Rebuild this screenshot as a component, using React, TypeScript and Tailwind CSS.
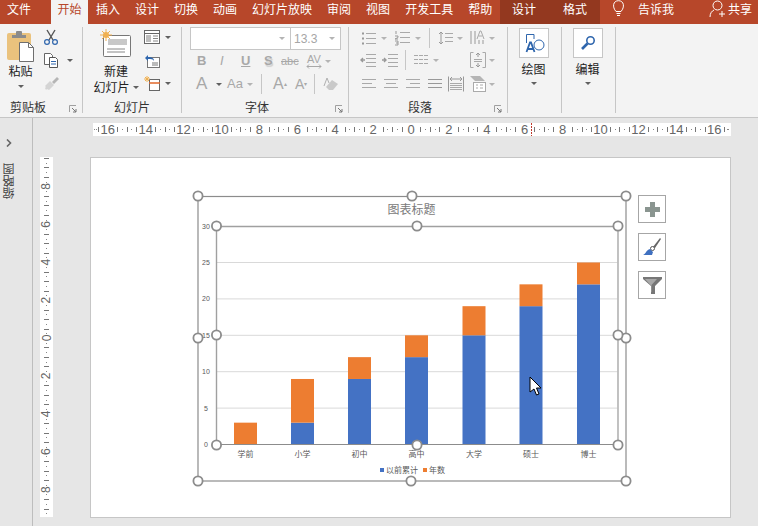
import type { ReactNode } from 'react';

const CJK = { fontFamily: '"Noto Sans CJK SC", "Liberation Sans", sans-serif' };
const LATIN = { fontFamily: '"Liberation Sans", sans-serif' };

const TABS = ['插入', '设计', '切换', '动画', '幻灯片放映', '审阅', '视图', '开发工具', '帮助'];

const BARS = [
  { name: '学前', x: 245.5, blue: 0, orange: 3 },
  { name: '小学', x: 302.5, blue: 3, orange: 6 },
  { name: '初中', x: 359.5, blue: 9, orange: 3 },
  { name: '高中', x: 416.5, blue: 12, orange: 3 },
  { name: '大学', x: 474, blue: 15, orange: 4 },
  { name: '硕士', x: 531, blue: 19, orange: 3 },
  { name: '博士', x: 588.5, blue: 22, orange: 3 },
];

const Y0 = 444.5;
const UNIT = 7.28;

function Caret({ dim = false }: { dim?: boolean }) {
  return (
    <span className={`inline-block h-0 w-0 border-x-[3px] border-t-[3px] border-x-transparent ${dim ? 'border-t-[#b4b4b4]' : 'border-t-[#606060]'}`} />
  );
}

function Ico({ w = 16, h = 16, children }: { w?: number; h?: number; children: ReactNode }) {
  return (
    <svg width={w} height={h} viewBox={`0 0 ${w} ${h}`} fill="none" className="shrink-0">
      {children}
    </svg>
  );
}

function Lines({ x, y, w, n, gap, c = '#a9a9a9' }: { x: number; y: number; w: number; n: number; gap: number; c?: string }) {
  return (
    <>
      {Array.from({ length: n }, (_, i) => (
        <path key={i} d={`M${x} ${y + i * gap + 0.5}h${w}`} stroke={c} />
      ))}
    </>
  );
}

function Group({ width, label, labelClass = '', launcher, children }: { width: number; label?: string; labelClass?: string; launcher?: boolean; children: ReactNode }) {
  return (
    <div className="flex shrink-0 flex-col" style={{ width }}>
      <div className="mt-[3px] flex h-[86px] flex-col border-r border-[#c6c6c6]">
        <div className="h-[73px]">{children}</div>
        <div className={`relative flex h-[13px] items-center justify-center text-[12px] leading-none text-[#333] ${labelClass}`}>
          {label}
          {launcher && (
            <svg width="8" height="8" viewBox="0 0 8 8" fill="none" className="absolute bottom-0 right-[5px]">
              <path d="M.5 7V.5H7" stroke="#a0a0a0" />
              <path d="M3 3l4 4M7 4v3H4" stroke="#777" />
            </svg>
          )}
        </div>
      </div>
    </div>
  );
}

function ClipboardGroup() {
  return (
    <div className="flex pl-[5px] pt-[2px]">
      <div className="flex w-[31px] flex-col items-center">
        <Ico w={31} h={33}>
          <rect x="2" y="4" width="24" height="27" rx="2" fill="#eac27d" />
          <path d="M7 9V6h4V3a1 1 0 0 1 1-1h4a1 1 0 0 1 1 1v3h4v3z" fill="#8b8b8b" />
          <path d="M14.5 13.5h9l5 5v14h-14z" fill="#fff" stroke="#6f6f6f" />
          <path d="M23.5 13.5v5h5" stroke="#6f6f6f" />
        </Ico>
        <span className="mt-px text-[12px] leading-[16px] text-[#222]">粘贴</span>
        <span className="mt-[6px] flex"><Caret /></span>
      </div>
      <div className="ml-[7px] flex flex-col gap-[7px]">
        <Ico w={16} h={16}>
          <path d="M4 1l6 10M12 1L6 11" stroke="#555" strokeWidth="1.4" />
          <circle cx="4" cy="13" r="2.4" stroke="#2f66ad" strokeWidth="1.2" />
          <circle cx="12" cy="13" r="2.4" stroke="#2f66ad" strokeWidth="1.2" />
        </Ico>
        <div className="flex items-center gap-[2px]">
          <Ico w={16} h={16}>
            <path d="M1.5 1.5h6l2 2v9h-8z" fill="#fff" stroke="#666" />
            <path d="M6.5 5.5h6l2 2v8h-8z" fill="#fff" stroke="#555" />
            <path d="M8 9.5h5M8 12h5" stroke="#2f66ad" />
          </Ico>
          <span className="ml-[6px] flex"><Caret /></span>
        </div>
        <Ico w={16} h={16}>
          <path d="M9 7l5-5 2 2-5 5z" fill="#b5b5b5" />
          <path d="M2 11l5-5 4 4-5 5-2-1-1 1-1-2 1-1z" fill="#d4d4d4" />
        </Ico>
      </div>
    </div>
  );
}

function SlidesGroup() {
  return (
    <div className="flex pl-[10px] pt-[2px]">
      <div className="flex w-[46px] flex-col items-center">
        <Ico w={32} h={28}>
          <rect x="3.5" y="6.5" width="27" height="21" rx="1" fill="#fff" stroke="#777" />
          <rect x="8" y="10" width="19" height="6" fill="#c8c8c8" />
          <path d="M7 20h18M7 23h18" stroke="#888" />
          <circle cx="6" cy="6" r="3" fill="#f0b050" />
          <path d="M6 0v12M0 6h12M2 2l8 8M10 2l-8 8" stroke="#f0b050" />
        </Ico>
        <span className="mt-[6px] whitespace-nowrap text-[12px] leading-[16px] text-[#222]">新建</span>
        <span className="flex items-center gap-[3px] whitespace-nowrap text-[12px] leading-[16px] text-[#222]">幻灯片<Caret /></span>
      </div>
      <div className="ml-[5px] flex flex-col gap-[8px] pt-px">
        <div className="flex items-center gap-[5px]">
          <Ico w={16} h={15}>
            <rect x=".5" y=".5" width="15" height="13" fill="#fff" stroke="#666" />
            <path d="M1 3.5h14" stroke="#666" />
            <rect x="2" y="5" width="5" height="7" fill="#bdbdbd" />
            <path d="M9 6h5M9 8.5h5M9 11h5" stroke="#888" />
          </Ico>
          <Caret />
        </div>
        <Ico w={16} h={15}>
          <rect x="3.5" y="4.5" width="12" height="10" fill="#fff" stroke="#777" />
          <rect x="8" y="9" width="6" height="4" fill="#bbb" />
          <path d="M1 5l3-3v2c4 0 6 1 6 4-1-2-3-2-6-2v2z" fill="#2f66ad" />
        </Ico>
        <div className="flex items-center gap-[5px]">
          <Ico w={16} h={15}>
            <rect x="5.5" y="3.5" width="10" height="11" fill="#fff" stroke="#666" />
            <path d="M5 7h11" stroke="#e0672a" strokeWidth="1.5" />
            <path d="M3 0v6M0 3h6M1 1l4 4M5 1L1 5" stroke="#f0b050" />
          </Ico>
          <Caret />
        </div>
      </div>
    </div>
  );
}

function FontGroup() {
  return (
    <div className="pl-[8px]" style={LATIN}>
      <div className="flex h-[23px] w-[151px] border border-[#c6c6c6] bg-white">
        <div className="flex flex-1 items-center justify-end border-r border-[#c6c6c6] pr-[5px]"><Caret dim /></div>
        <div className="flex w-[49px] items-center justify-between pl-[3px] pr-[5px] text-[12px] text-[#a6a6a6]">
          13.3<Caret dim />
        </div>
      </div>
      <div className="mt-px flex h-[20px] items-center pl-[7px] text-[13px] text-[#a8a8a8]">
        <span className="w-[23px] font-bold">B</span>
        <span className="w-[21px] italic">I</span>
        <span className="w-[23px] font-bold underline">U</span>
        <span className="w-[17px] font-bold [text-shadow:1px_2px_1px_#cfcfcf]">S</span>
        <span className="w-[22px] text-[11px] line-through">abc</span>
        <span className="flex w-[22px] flex-col items-center text-[11px] leading-[10px]">
          AV
          <svg width="16" height="5" viewBox="0 0 16 5" fill="none">
            <path d="M1 2.5h14M3 .5l-2 2 2 2M13 .5l2 2-2 2" stroke="#a8a8a8" />
          </svg>
        </span>
        <Caret dim />
      </div>
      <div className="mt-[2px] flex h-[22px] items-center pl-[6px] text-[14px] text-[#a8a8a8]">
        <span className="w-[20px] text-[17px]">A</span>
        <span className="mr-[5px] flex"><Caret /></span>
        <span className="w-[20px] text-[13px]">Aa</span>
        <span className="flex w-[14px]"><Caret dim /></span>
        <span className="mr-[11px] h-[20px] w-px bg-[#c6c6c6]" />
        <span className="w-[22px] text-[16px]">A<sup className="text-[6px]">▴</sup></span>
        <span className="w-[19px] text-[14px]">A<sup className="text-[6px]">▾</sup></span>
        <span className="mr-[8px] h-[20px] w-px bg-[#c6c6c6]" />
        <Ico w={15} h={15}>
          <path d="M3 10l6-7 6 4-5 6H6z" fill="#c9c9c9" />
          <path d="M1 9l3-8 2 5" stroke="#b0b0b0" />
        </Ico>
      </div>
    </div>
  );
}

function ParagraphGroup() {
  return (
    <div className="pl-[12px] pt-[2px]">
      <div className="flex h-[18px] items-center">
        <Ico w={15} h={14}>
          <Lines x={5} y={2} w={10} n={3} gap={5} />
          <path d="M1 2.5h2M1 7.5h2M1 12.5h2" stroke="#999" strokeWidth="2" />
        </Ico>
        <span className="ml-[5px] mr-[7px] flex"><Caret dim /></span>
        <Ico w={16} h={16}>
          <Lines x={6} y={2} w={10} n={3} gap={5} />
          <path d="M2 1v3M1 6h3v1.5L1 9h3M1 11h3v4H1M2 13h2" stroke="#999" />
        </Ico>
        <span className="ml-[5px] mr-[8px] flex"><Caret dim /></span>
        <span className="mr-[8px] h-[20px] w-px bg-[#c6c6c6]" />
        <Ico w={15} h={16}>
          <path d="M3 2v12M1 4l2-2 2 2M1 12l2 2 2-2" stroke="#999" />
          <Lines x={7} y={3} w={8} n={3} gap={4} />
        </Ico>
        <span className="ml-[4px] mr-[7px] flex"><Caret dim /></span>
        <Ico w={16} h={16}>
          <path d="M1 1v13M5 1v13M9 10v4M13 10v4" stroke="#999" />
          <path d="M7 9l3-8h1l3 8M8.500 6h4" stroke="#aaa" />
        </Ico>
        <span className="ml-[3px] flex"><Caret dim /></span>
      </div>
      <div className="-ml-px mt-[4px] flex h-[18px] items-center">
        <Ico w={16} h={14}>
          <Lines x={6} y={1} w={10} n={4} gap={4} />
          <path d="M1 7h4M3 5L1 7l2 2" stroke="#999" strokeWidth="1.4" />
        </Ico>
        <span className="w-[6px]" />
        <Ico w={16} h={14}>
          <Lines x={6} y={1} w={10} n={4} gap={4} />
          <path d="M0 7h4M2 5l2 2-2 2" stroke="#999" strokeWidth="1.4" />
        </Ico>
        <span className="ml-[7px] mr-[8px] h-[20px] w-px bg-[#c6c6c6]" />
        <Ico w={14} h={12}>
          <Lines x={0} y={1} w={4} n={3} gap={4} />
          <Lines x={5} y={1} w={4} n={3} gap={4} />
          <Lines x={10} y={1} w={4} n={3} gap={4} />
        </Ico>
        <span className="ml-[5px] mr-[31px] flex"><Caret dim /></span>
        <Ico w={16} h={16}>
          <path d="M3.5.5h-3v15h3M12.5.5h3v15h-3" stroke="#aaa" />
          <path d="M8 1v4M8 11v4M6 3l2-2 2 2M6 13l2 2 2-2" stroke="#999" />
          <Lines x={4} y={7} w={8} n={2} gap={2} />
        </Ico>
        <span className="ml-[3px] flex"><Caret dim /></span>
      </div>
      <div className="mt-[6px] flex h-[18px] items-center">
        <Ico w={15} h={12}>
          <path d="M1 1.5h14M1 5.5h10M1 9.5h14" stroke="#a9a9a9" />
        </Ico>
        <span className="w-[7px]" />
        <Ico w={15} h={12}>
          <path d="M1 1.5h14M3 5.5h10M1 9.5h14" stroke="#a9a9a9" />
        </Ico>
        <span className="w-[7px]" />
        <Ico w={15} h={12}>
          <path d="M1 1.5h14M5 5.5h10M1 9.5h14" stroke="#a9a9a9" />
        </Ico>
        <span className="w-[7px]" />
        <Ico w={15} h={12}><Lines x={1} y={1} w={14} n={3} gap={4} c="#999" /></Ico>
        <span className="w-[6px]" />
        <Ico w={16} h={16}>
          <path d="M.5.5v15M15.5.5v15M3 3h10M4 1L2 3l2 2M12 1l2 2-2 2" stroke="#999" />
          <Lines x={2} y={7} w={12} n={4} gap={2} />
        </Ico>
        <span className="w-[6px]" />
        <Ico w={16} h={16}>
          <path d="M0 0h10l5 5H5z" fill="#b5b5b5" />
          <rect x="3.5" y="6.5" width="12" height="9" fill="#fff" stroke="#aaa" />
          <path d="M6 9h2M10 9h3M6 12h2M10 12h3" stroke="#aaa" />
        </Ico>
        <span className="ml-[3px] flex"><Caret dim /></span>
      </div>
    </div>
  );
}

function BigTool({ label, children }: { label: string; children: ReactNode }) {
  return (
    <div className="flex flex-col items-center">
      <div className="flex h-[30px] w-[30px] items-center justify-center border border-[#c6c6c6] bg-white">{children}</div>
      <span className="mt-[3px] text-[12px] leading-[16px] text-[#222]">{label}</span>
      <span className="mt-[5px] flex"><Caret /></span>
    </div>
  );
}

function Ribbon() {
  return (
    <div className="flex h-[94px] border-b border-[#c6c6c6] bg-[#f3f3f3]">
      <Group width={83} label="剪贴板" labelClass="pr-[26px]" launcher><ClipboardGroup /></Group>
      <Group width={99} label="幻灯片"><SlidesGroup /></Group>
      <Group width={167} label="字体" labelClass="pr-[16px]" launcher><FontGroup /></Group>
      <Group width={159} label="段落" labelClass="pr-[16px]" launcher><ParagraphGroup /></Group>
      <Group width={54}>
        <div className="flex justify-center pr-[2px] pt-px">
          <BigTool label="绘图">
            <Ico w={22} h={22}>
              <path d="M3.500 11V2.500H11V7" stroke="#2f66ad" />
              <circle cx="16" cy="13" r="5" fill="#fff" stroke="#2f66ad" />
              <path d="M3.500 20L7 10.500h1L11.500 20M5 17h5" stroke="#2f66ad" strokeWidth="1.800" />
            </Ico>
          </BigTool>
        </div>
      </Group>
      <Group width={54}>
        <div className="flex justify-center pr-[2px] pt-px">
          <BigTool label="编辑">
            <Ico w={16} h={16}>
              <circle cx="10.5" cy="5.5" r="3.7" stroke="#2f66ad" strokeWidth="1.6" />
              <path d="M7.5 8.5L2 14" stroke="#2f66ad" strokeWidth="2.6" />
            </Ico>
          </BigTool>
        </div>
      </Group>
    </div>
  );
}

function TitleBar() {
  return (
    <div className="flex h-[24px] items-start bg-[#b7472a] text-[12px] leading-[17px] text-white">
      <span className="ml-[7px] mr-[20px]">文件</span>
      <span className="h-[24px] w-[37px] bg-[#f3f3f3] text-center text-[#b7472a]">开始</span>
      <div className="ml-[8px] flex w-[396px] gap-[15px]">
        {TABS.map((t) => (
          <span key={t} className="whitespace-nowrap">{t}</span>
        ))}
      </div>
      <div className="ml-[8px] flex h-[24px] w-[100px] gap-[27px] bg-[#93381f] pl-[12px]">
        <span>设计</span>
        <span>格式</span>
      </div>
      <span className="ml-[12px] mr-[13px]">
        <Ico w={13} h={17}>
          <path d="M4 11.5C0 7 1 .7 6.5.7S13 7 9 11.5zM4.5 13.5h4M5 15.5h3" stroke="#fff" />
        </Ico>
      </span>
      <span className="text-[12px]">告诉我</span>
      <span className="ml-[35px] mr-[3px]">
        <Ico w={16} h={18}>
          <circle cx="8.5" cy="5.5" r="4.5" stroke="#fff" />
          <path d="M1 17c0-4 2-6 4-7M10 14h6M13 11v6" stroke="#fff" />
        </Ico>
      </span>
      <span>共享</span>
    </div>
  );
}

function HRuler() {
  const labels = [16, 14, 12, 10, 8, 6, 4, 2, 0, 2, 4, 6, 8, 10, 12, 14, 16];
  const ticks = Array.from({ length: 137 }, (_, i) => i - 68);
  return (
    <svg width="638" height="13" viewBox="0 0 638 13" className="block bg-white">
      {ticks.map((t) => {
        const m = ((t % 8) + 8) % 8;
        if (m === 0 || m === 1 || m === 7) return null;
        const x = Math.round(318 + t * 4.7375) + 0.5;
        return t % 2 === 0 ? (
          <path key={t} d={`M${x} 4v5`} stroke="#777" />
        ) : (
          <path key={t} d={`M${x} 6v1`} stroke="#888" />
        );
      })}
      <path d="M3.5 6v1M634.5 6v1" stroke="#888" />
      {labels.map((n, i) => (
        <text key={i} x={318 + (i - 8) * 37.9} y="11" fontSize="13" fill="#666" textAnchor="middle" fontFamily="Liberation Sans">{n}</text>
      ))}
      <path d="M438.5 0v13" stroke="#c0392b" strokeDasharray="2 1" />
    </svg>
  );
}

function VRuler() {
  const labels = [8, 6, 4, 2, 0, 2, 4, 6, 8];
  const ticks = Array.from({ length: 77 }, (_, i) => i - 38);
  return (
    <svg width="13" height="360" viewBox="0 0 13 360" className="block shrink-0 bg-white">
      {ticks.map((t) => {
        const m = ((t % 8) + 8) % 8;
        if (m === 0) return null;
        const y = Math.round(181 + t * 4.7375) + 0.5;
        return t % 2 === 0 ? (
          <path key={t} d={`M4 ${y}h5`} stroke="#777" />
        ) : (
          <path key={t} d={`M6 ${y}h1`} stroke="#888" />
        );
      })}
      {labels.map((n, i) => {
        const y = 181 + (i - 4) * 37.9;
        return (
          <text key={i} x="6.5" y={y} fontSize="12" fill="#666" textAnchor="middle" dominantBaseline="central" transform={`rotate(-90 6.5 ${y})`} fontFamily="Liberation Sans">{n}</text>
        );
      })}
    </svg>
  );
}

function Handle({ x, y }: { x: number; y: number }) {
  return <circle cx={x} cy={y} r="4.6" fill="#fff" stroke="#8c8c8c" strokeWidth="1.8" />;
}

// chart uses page coordinates, the viewBox maps them onto the slide
function Chart() {
  const outer: [number, number][] = [[198, 196], [412, 196], [626, 196], [198, 338], [626, 338], [198, 481], [411, 481], [626, 481]];
  const inner: [number, number][] = [[216.5, 226], [417, 226], [618, 226], [216.5, 335], [618, 335], [216.5, 445], [417, 445], [618, 445]];
  return (
    <svg width="641" height="361" viewBox="90 157 641 361" className="block" style={CJK}>
      {[0, 5, 10, 15, 20, 25, 30].map((v) => {
        const y = Y0 - v * UNIT;
        return (
          <g key={v}>
            {v > 0 && v < 30 && <path d={`M217 ${y}H618`} stroke="#d9d9d9" />}
            <text x="206" y={y + 2.5} fontSize="7" fill="#595959" textAnchor="middle" fontFamily="Liberation Sans">{v}</text>
          </g>
        );
      })}
      {BARS.map((b) => (
        <g key={b.name}>
          <rect x={b.x - 11.5} y={Y0 - b.blue * UNIT} width="23" height={b.blue * UNIT} fill="#4472c4" />
          <rect x={b.x - 11.5} y={Y0 - (b.blue + b.orange) * UNIT} width="23" height={b.orange * UNIT} fill="#ed7d31" />
          <text x={b.x} y="457" fontSize="8" fill="#595959" textAnchor="middle">{b.name}</text>
        </g>
      ))}
      <path d="M217 444.5H618" stroke="#8c8c8c" strokeWidth="1.2" />
      <text x="411.5" y="214" fontSize="12" fill="#7a7a7a" textAnchor="middle">图表标题</text>
      <rect x="380" y="468" width="4" height="4" fill="#4472c4" />
      <text x="386" y="473" fontSize="8" fill="#595959">以前累计</text>
      <rect x="423" y="468" width="4" height="4" fill="#ed7d31" />
      <text x="429" y="473" fontSize="8" fill="#595959">年数</text>
      <rect x="198" y="196.5" width="428" height="284.5" stroke="#8c8c8c" strokeWidth="1.2" fill="none" />
      <path d="M216.5 445V226.5H618" stroke="#a0a0a0" strokeWidth="1.4" fill="none" />
      <path d="M618 226.5V445" stroke="#bbbbbb" strokeWidth="1.8" fill="none" />
      {outer.map(([x, y]) => <Handle key={`o${x}-${y}`} x={x} y={y} />)}
      {inner.map(([x, y]) => <Handle key={`i${x}-${y}`} x={x} y={y} />)}
    </svg>
  );
}

function SideButton({ children }: { children: ReactNode }) {
  return <div className="flex h-[28px] w-[28px] items-center justify-center border border-[#a6a6a6] bg-white">{children}</div>;
}

function Slide() {
  return (
    <div className="relative ml-[37px] h-[361px] w-[641px] border border-[#c6c6c6] bg-white">
      <div className="-m-px"><Chart /></div>
      <div className="absolute left-[547px] top-[37px] flex flex-col gap-[10px]">
        <SideButton>
          <Ico w={15} h={15}><path d="M5 0h5v5h5v5h-5v5H5v-5H0V5h5z" fill="#8a9590" /></Ico>
        </SideButton>
        <SideButton>
          <Ico w={20} h={20}>
            <path d="M18 1l1 1-6 9-2-1z" fill="#666" />
            <circle cx="10.5" cy="11.5" r="2" fill="#fff" stroke="#555" />
            <path d="M1 18c3-1 3-5 7-6l3 3-1 3z" fill="#3f70c0" />
          </Ico>
        </SideButton>
        <SideButton>
          <Ico w={19} h={17}>
            <path d="M0 0h19v2l-7 7v8H8V9L0 2z" fill="#777" />
            <path d="M2 2h12L8.5 8v7H8V8.5z" fill="#a8a8a8" />
          </Ico>
        </SideButton>
      </div>
      <svg width="13" height="20" viewBox="0 0 13 20" className="absolute left-[438px] top-[218px]">
        <path d="M1 1v15l4-3 2.5 6 2.5-1-2.5-6H12z" fill="#fff" stroke="#000" />
      </svg>
    </div>
  );
}

export default function App() {
  return (
    <div className="flex h-[526px] w-[758px] flex-col overflow-hidden bg-[#e6e6e6]" style={CJK}>
      <TitleBar />
      <Ribbon />
      <div className="flex flex-1">
        <div className="flex w-[33px] shrink-0 flex-col items-center border-r border-[#bdbdbd] pr-[14px] pt-[21px]">
          <svg width="6" height="8" viewBox="0 0 6 8" fill="none" className="shrink-0">
            <path d="M1 .5L4.5 4 1 7.5" stroke="#666" strokeWidth="1.6" />
          </svg>
          <span className="mt-[16px] rotate-180 text-[12px] leading-none text-[#444] [writing-mode:vertical-rl]">缩略图</span>
        </div>
        <div className="flex-1">
          <div className="ml-[60px] mt-[5px]"><HRuler /></div>
          <div className="ml-[7px] mt-[21px] flex">
            <VRuler />
            <Slide />
          </div>
        </div>
      </div>
    </div>
  );
}
